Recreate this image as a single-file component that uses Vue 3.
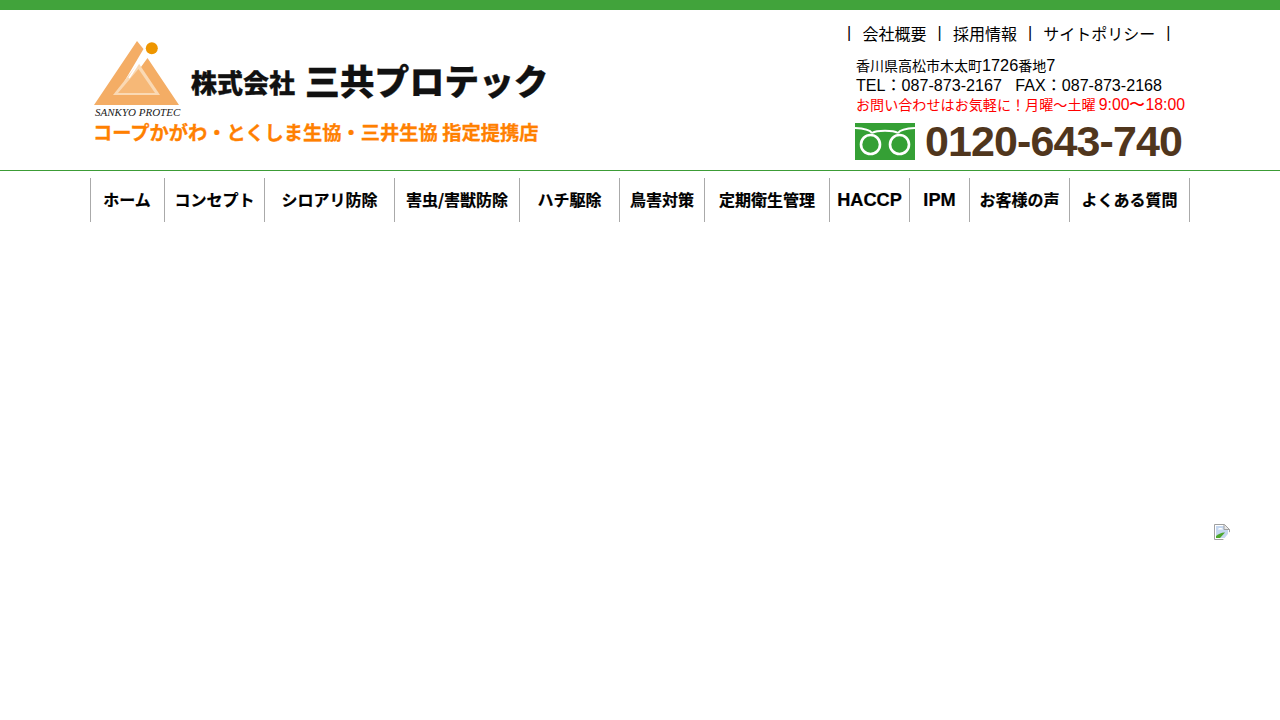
<script setup>
const navItems = [
  { label: 'ホーム', width: 75 },
  { label: 'コンセプト', width: 100 },
  { label: 'シロアリ防除', width: 130 },
  { label: '害虫/害獣防除', width: 125 },
  { label: 'ハチ駆除', width: 100 },
  { label: '鳥害対策', width: 85 },
  { label: '定期衛生管理', width: 125 },
  { label: 'HACCP', width: 80, latin: true },
  { label: 'IPM', width: 60, latin: true },
  { label: 'お客様の声', width: 100 },
  { label: 'よくある質問', width: 120 }
]
const utilLinks = ['会社概要', '採用情報', 'サイトポリシー']
</script>

<template>
  <div class="page">
    <header class="header">
      <div class="header-inner">
        <div class="brand">
          <div class="brand-row">
            <div class="mark">
              <svg class="mark-svg" viewBox="90 38 96 68" width="96" height="68" aria-hidden="true">
                <path d="M137 41 L143.5 49 L124 82 L128 85 L147.5 58 L179 105 L94 105 Z" fill="#f4ad65" />
                <path d="M138.500 63 L160 95 L113 95 Z" fill="#fad9b4" />
                <path d="M138.500 69 L155 93 L118 93 Z" fill="#f6b877" />
                <path d="M140 61 L129 78" stroke="#fff" stroke-width="1.500" fill="none" />
                <circle cx="151.800" cy="48.300" r="6" fill="#ee9600" />
              </svg>
              <span class="mark-text">SANKYO PROTEC</span>
            </div>
            <div class="company">
              <span class="company-kind">株式会社</span>
              <span class="company-name">三共プロテック</span>
            </div>
          </div>
          <p class="tagline">コープかがわ・とくしま生協・三井生協 指定提携店</p>
        </div>
        <div class="contact">
          <nav class="util">
            <span class="bar">|</span>
            <template v-for="link in utilLinks" :key="link">
              <a class="util-link">{{ link }}</a>
              <span class="bar">|</span>
            </template>
          </nav>
          <div class="info">
            <p class="addr">香川県高松市木太町<span class="num">1726</span>番地<span class="num">7</span></p>
            <p class="tel">TEL：087-873-2167 &nbsp; FAX：087-873-2168</p>
            <p class="hours">お問い合わせはお気軽に！月曜〜土曜 <span class="num-red">9:00〜18:00</span></p>
            <div class="free">
              <svg class="free-icon" viewBox="0 0 60 37" width="60" height="37" aria-label="フリーダイヤル">
                <rect width="60" height="37" fill="#35a035" />
                <path d="M0 5 C10 5.500 15 7 17 10 M60 5 C50 5.500 45 7 43 10 M17 10 C22 7 38 7 43 10" stroke="#fff" stroke-width="2" fill="none" />
                <circle cx="15.500" cy="21.500" r="9.500" stroke="#fff" stroke-width="2.600" fill="none" />
                <circle cx="44.500" cy="21.500" r="9.500" stroke="#fff" stroke-width="2.600" fill="none" />
              </svg>
              <span class="free-number">0120-643-740</span>
            </div>
          </div>
        </div>
      </div>
    </header>

    <nav class="gnav">
      <a
        v-for="item in navItems"
        :key="item.label"
        class="gnav-item"
        :class="{ latin: item.latin }"
        :style="{ width: item.width + 'px' }"
      >{{ item.label }}</a>
    </nav>

    <main class="main">
      <svg class="broken" viewBox="0 0 16 16" width="16" height="16" aria-hidden="true">
        <path d="M0.500 0.500 H10.500 L15.500 5.500 V15.500 H0.500 Z" fill="#fff" stroke="#a0a0a0" />
        <path d="M2 2 H10 L14 6 V14 H2 Z" fill="#c5d7ef" />
        <path d="M2 14 L2 12 Q7 8 11 8.500 L6 14 Z" fill="#4ca72e" />
        <path d="M4 5 Q5 3.500 7 4 Q9 4 9 5.500 H4 Z" fill="#fff" />
        <path d="M10 0.500 V5.500 H15.500 L10.500 0.500" fill="#e8e8e8" stroke="#a0a0a0" />
        <path d="M15.500 8 L9 16 H16 V8 Z" fill="#fff" />
      </svg>
    </main>
  </div>
</template>

<style scoped>
.page {
  width: 1280px;
  min-height: 720px;
  background: #fff;
  border-top: 10px solid #41a33b;
  box-sizing: border-box;
  font-family: "Liberation Sans", "Noto Sans CJK JP", sans-serif;
  color: #000;
}
.header {
  height: 161px;
  box-sizing: border-box;
  border-bottom: 1px solid #3c9c36;
}
.header-inner {
  width: 1100px;
  margin: 0 auto;
  display: flex;
  justify-content: space-between;
}
.brand {
  padding-top: 28px;
  width: 470px;
}
.brand-row {
  display: flex;
  align-items: flex-start;
}
.mark {
  flex: none;
  width: 96px;
  height: 84px;
}
.mark-svg {
  display: block;
}
.mark-text {
  display: block;
  margin: 0 0 0 5px;
  font-family: "Liberation Serif", serif;
  font-style: italic;
  font-size: 11px;
  line-height: 13px;
  color: #222;
  white-space: nowrap;
}
.company {
  display: flex;
  align-items: center;
  gap: 10px;
  margin: 24px 0 0 5px;
  font-family: "Noto Sans CJK JP", sans-serif;
  font-weight: 900;
  color: #111;
  white-space: nowrap;
  -webkit-text-stroke: 0.3px #111;
}
.company-kind {
  font-size: 26px;
  line-height: 40px;
}
.company-name {
  font-size: 34.800px;
  line-height: 40px;
  margin-top: -4px;
}
.tagline {
  margin: -3px 0 0 3px;
  font-family: "Noto Sans CJK JP", sans-serif;
  font-weight: 700;
  font-size: 19.250px;
  line-height: 26px;
  color: #ff8000;
  white-space: nowrap;
  -webkit-text-stroke: 0.3px #ff8000;
}
.contact {
  width: 345px;
  margin-right: -1px;
  font-family: "Noto Sans CJK JP", "Liberation Sans", sans-serif;
}
.util {
  display: flex;
  align-items: center;
  gap: 11px;
  padding: 11px 0 0 1px;
  font-size: 16px;
  line-height: 24px;
  white-space: nowrap;
}
.util-link {
  color: #000;
}
.bar {
  font-family: "Liberation Sans", sans-serif;
  font-size: 16px;
  width: 4.450px;
}
.info {
  padding: 10px 0 0 9px;
}
.info p {
  margin: 0 0 0 1px;
  white-space: nowrap;
}
.addr {
  font-size: 14px;
  line-height: 21px;
}
.num {
  font-family: "Liberation Sans", sans-serif;
  font-size: 16.300px;
}
.tel {
  font-family: "Liberation Sans", "Noto Sans CJK JP", sans-serif;
  font-size: 16.100px;
  line-height: 19px;
}
.hours {
  font-size: 14.100px;
  line-height: 18px;
  color: #f00;
}
.num-red {
  font-family: "Liberation Sans", sans-serif;
  font-size: 15.800px;
}
.free {
  display: flex;
  align-items: center;
  gap: 10px;
  margin-top: 9px;
  height: 37px;
}
.free-icon {
  display: block;
  flex: none;
}
.free-number {
  font-family: "Liberation Sans", sans-serif;
  font-weight: 700;
  font-size: 43px;
  letter-spacing: -0.900px;
  line-height: 37px;
  color: #50361d;
  white-space: nowrap;
}
.gnav {
  width: 1100px;
  height: 44px;
  margin: 7px auto 0;
  display: flex;
  border-left: 1px solid #aaa;
  box-sizing: border-box;
  font-family: "Noto Sans CJK JP", sans-serif;
  font-weight: 700;
  font-size: 16px;
}
.gnav-item {
  display: flex;
  align-items: center;
  justify-content: center;
  box-sizing: border-box;
  border-right: 1px solid #aaa;
  padding-bottom: 2px;
  white-space: nowrap;
  color: #000;
  -webkit-text-stroke: 0.2px #000;
}
.gnav-item:first-child {
  margin-left: -1px;
}
.gnav-item.latin {
  font-family: "Liberation Sans", sans-serif;
  font-size: 18.200px;
  padding-bottom: 0;
}
.main {
  display: flex;
  justify-content: flex-end;
  padding: 302px 50px 0 0;
}
.broken {
  display: block;
}
</style>
